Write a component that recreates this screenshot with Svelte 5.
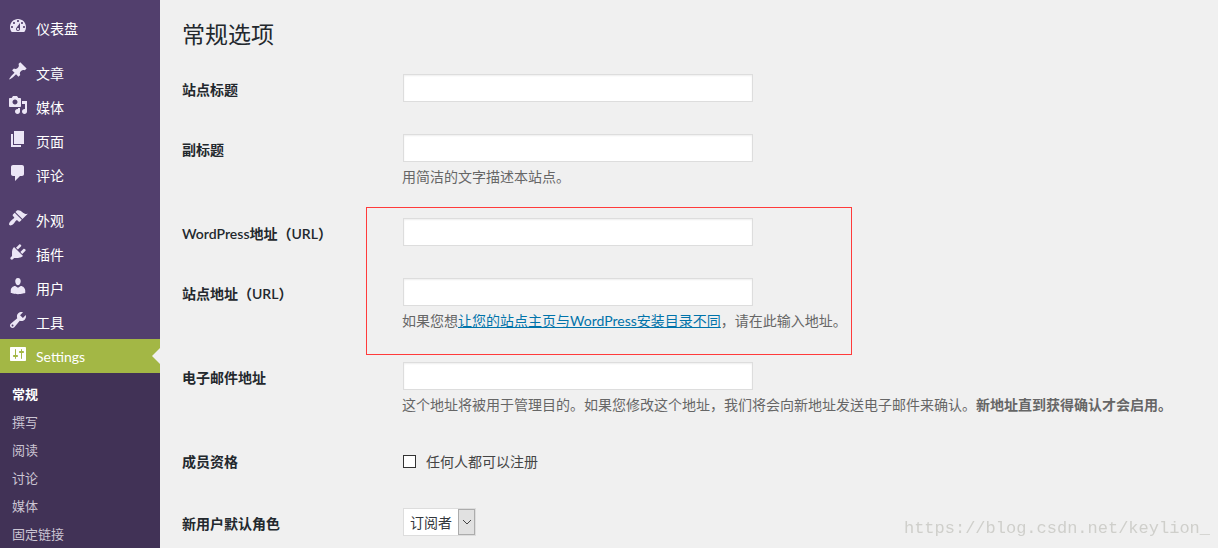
<script lang="ts">
	interface MenuItem {
		label: string;
		icon: string;
		gap?: boolean; // leaves a separator above the item
	}

	// 20x20 dashicons
	const menu: MenuItem[] = [
		{
			label: '仪表盘',
			icon: 'M3.76 16h12.48c1.1-1.37 1.76-3.11 1.76-5 0-4.42-3.58-8-8-8s-8 3.58-8 8c0 1.89.66 3.63 1.76 5zM10 4c.55 0 1 .45 1 1s-.45 1-1 1-1-.45-1-1 .45-1 1-1zM6 6c.55 0 1 .45 1 1s-.45 1-1 1-1-.45-1-1 .45-1 1-1zm8 0c.55 0 1 .45 1 1s-.45 1-1 1-1-.45-1-1 .45-1 1-1zm-5.37 5.55L12 7v6c0 1.1-.9 2-2 2s-2-.9-2-2c0-.57.24-1.08.63-1.45zM4 10c.55 0 1 .45 1 1s-.45 1-1 1-1-.45-1-1 .45-1 1-1zm12 0c.55 0 1 .45 1 1s-.45 1-1 1-1-.45-1-1 .45-1 1-1zm-5 3c0-.55-.45-1-1-1s-1 .45-1 1 .45 1 1 1 1-.45 1-1z'
		},
		{
			label: '文章',
			gap: true,
			icon: 'M10.44 3.02l1.82-1.82 6.36 6.35-1.83 1.82c-1.05-.68-2.48-.57-3.41.36l-.75.75c-.92.93-1.04 2.35-.35 3.41l-1.83 1.82-2.41-2.41-2.8 2.79c-.42.42-3.38 2.71-3.8 2.29s1.86-3.39 2.28-3.81l2.79-2.79L4.1 9.36l1.83-1.82c1.05.69 2.48.57 3.4-.36l.75-.75c.93-.92 1.05-2.35.36-3.41z'
		},
		{
			label: '媒体',
			icon: 'M13 11V4c0-.55-.45-1-1-1h-1.67L9 1H5L3.67 3H2c-.55 0-1 .45-1 1v7c0 .55.45 1 1 1h10c.55 0 1-.45 1-1zM7 4.5c1.38 0 2.5 1.12 2.5 2.5S8.38 9.5 7 9.5 4.5 8.38 4.5 7 5.62 4.5 7 4.5zM14 6h5v10.5c0 1.38-1.12 2.5-2.5 2.5S14 17.88 14 16.5s1.12-2.5 2.5-2.5c.17 0 .34.02.5.05V9h-3V6zm-4 8.05V13h2v3.5c0 1.38-1.12 2.5-2.5 2.5S7 17.88 7 16.5 8.12 14 9.5 14c.17 0 .34.02.5.05z'
		},
		{
			label: '页面',
			icon: 'M6 15V2h10v13H6zm-1 1h8v2H3V5h2v11z'
		},
		{
			label: '评论',
			icon: 'M5 2h9c1.1 0 2 .9 2 2v7c0 1.1-.9 2-2 2h-2l-5 5v-5H5c-1.1 0-2-.9-2-2V4c0-1.1.9-2 2-2z'
		},
		{
			label: '外观',
			gap: true,
			icon: 'M14.48 11.06L7.41 3.99l1.5-1.5c.5-.56 2.3-.47 3.51.32 1.21.8 1.43 1.28 2.91 2.1 1.18.64 2.45 1.26 4.45.85zm-.71.71L6.7 4.7 4.93 6.47c-.39.39-.39 1.02 0 1.41l1.06 1.06c.39.39.39 1.03 0 1.42-.6.6-1.43 1.11-2.21 1.69-.35.26-.7.53-1.01.84C1.43 14.23.4 16.08 1.4 17.07c.99 1 2.84-.03 4.18-1.36.31-.31.58-.66.85-1.02.57-.78 1.08-1.61 1.69-2.21.39-.39 1.02-.39 1.41 0l1.06 1.06c.39.39 1.02.39 1.41 0z'
		},
		{
			label: '插件',
			icon: 'M13.11 4.36L9.87 7.6 8 5.73l3.24-3.24c.35-.34 1.05-.2 1.56.32.52.51.66 1.21.31 1.55zm-8 1.77l.91-1.12 9.01 9.01-1.19.84c-.71.71-2.63 1.16-3.82 1.16H6.14L4.9 17.26c-.59.59-1.54.59-2.12 0-.59-.58-.59-1.53 0-2.12l1.24-1.24v-3.88c0-1.13.4-3.19 1.09-3.89zm7.26 3.97l3.24-3.24c.34-.35 1.04-.21 1.55.31.52.51.66 1.21.31 1.55l-3.24 3.25z'
		},
		{
			label: '用户',
			icon: 'M10 9.25c-2.27 0-2.73-3.44-2.73-3.44C7 4.02 7.82 2 9.97 2c2.16 0 2.98 2.02 2.71 3.81 0 0-.41 3.44-2.68 3.44zm0 2.57L12.72 10c2.39 0 4.52 2.33 4.52 4.53v2.49s-3.65 1.13-7.24 1.13c-3.65 0-7.24-1.13-7.24-1.13v-2.49c0-2.25 1.94-4.48 4.47-4.48z'
		},
		{
			label: '工具',
			icon: 'M16.68 9.77c-1.34 1.34-3.3 1.67-4.95.99l-5.41 6.52c-.99.99-2.59.99-3.58 0s-.99-2.59 0-3.57l6.52-5.42c-.68-1.65-.35-3.61.99-4.95 1.28-1.28 3.12-1.62 4.72-1.06l-2.89 2.89 2.82 2.82 2.86-2.87c.53 1.58.18 3.39-1.08 4.65zM3.81 16.21c.4.39 1.04.39 1.43 0 .4-.4.4-1.04 0-1.43-.39-.4-1.03-.4-1.43 0-.39.39-.39 1.03 0 1.43z'
		},
		{
			label: 'Settings',
			icon: 'M18 16V4c0-.55-.45-1-1-1H3c-.55 0-1 .45-1 1v12c0 .55.45 1 1 1h14c.55 0 1-.45 1-1zM8 11h1c.55 0 1 .45 1 1s-.45 1-1 1H8v1.5c0 .28-.22.5-.5.5s-.5-.22-.5-.5V13H6c-.55 0-1-.45-1-1s.45-1 1-1h1V5.5c0-.28.22-.5.5-.5s.5.22.5.5V11zm5-2h-1c-.55 0-1-.45-1-1s.45-1 1-1h1V5.5c0-.28.22-.5.5-.5s.5.22.5.5V7h1c.55 0 1 .45 1 1s-.45 1-1 1h-1v5.5c0 .28-.22.5-.5.5s-.5-.22-.5-.5V9z'
		}
	];

	const submenu = ['常规', '撰写', '阅读', '讨论', '媒体', '固定链接'];

	const currentItem = 'Settings';
	const currentPage = '常规';

	let title = $state('');
	let tagline = $state('');
	let wpUrl = $state('');
	let siteUrl = $state('');
	let email = $state('');
	let canRegister = $state(false);
	let role = $state('订阅者');
</script>

<div class="admin">
	<nav class="sidebar">
		<ul class="menu">
			{#each menu as item}
				<li class:gap={item.gap}>
					<a href="#top" class="menu-link" class:current={item.label === currentItem}>
						<svg class="menu-icon" viewBox="0 0 20 20" aria-hidden="true">
							<path d={item.icon} fill-rule="evenodd" />
						</svg>
						<span class="menu-label">{item.label}</span>
					</a>
				</li>
			{/each}
		</ul>
		<ul class="submenu">
			{#each submenu as page}
				<li>
					<a href="#top" class="submenu-link" class:current={page === currentPage}>{page}</a>
				</li>
			{/each}
		</ul>
	</nav>

	<main class="content">
		<h1>常规选项</h1>
		<form>
			<table class="form-table">
				<tbody>
					<tr>
						<th scope="row"><label for="blogname">站点标题</label></th>
						<td><input id="blogname" class="text" type="text" bind:value={title} /></td>
					</tr>
					<tr>
						<th scope="row"><label for="blogdescription">副标题</label></th>
						<td>
							<input id="blogdescription" class="text" type="text" bind:value={tagline} />
							<p class="description">用简洁的文字描述本站点。</p>
						</td>
					</tr>
					<tr>
						<th scope="row"><label for="siteurl">WordPress地址（URL）</label></th>
						<td class="marked">
							<input id="siteurl" class="text" type="url" bind:value={wpUrl} />
							<div class="marker"></div>
						</td>
					</tr>
					<tr>
						<th scope="row"><label for="home">站点地址（URL）</label></th>
						<td>
							<input id="home" class="text" type="url" bind:value={siteUrl} />
							<p class="description">
								如果您想<a href="#top">让您的站点主页与WordPress安装目录不同</a>，请在此输入地址。
							</p>
						</td>
					</tr>
					<tr>
						<th scope="row"><label for="admin_email">电子邮件地址</label></th>
						<td>
							<input id="admin_email" class="text" type="email" bind:value={email} />
							<p class="description">
								这个地址将被用于管理目的。如果您修改这个地址，我们将会向新地址发送电子邮件来确认。<strong>新地址直到获得确认才会启用。</strong>
							</p>
						</td>
					</tr>
					<tr>
						<th scope="row">成员资格</th>
						<td>
							<label class="check">
								<input type="checkbox" bind:checked={canRegister} />
								任何人都可以注册
							</label>
						</td>
					</tr>
					<tr>
						<th scope="row"><label for="default_role">新用户默认角色</label></th>
						<td>
							<div class="select">
								<select id="default_role" bind:value={role}>
									<option>订阅者</option>
								</select>
								<span class="select-arrow">
									<svg viewBox="0 0 10 6" aria-hidden="true"><path d="M1 1l4 4 4-4" /></svg>
								</span>
							</div>
						</td>
					</tr>
				</tbody>
			</table>
		</form>
	</main>

	<div class="watermark">https://blog.csdn.net/keylion_</div>
</div>

<style>
	:global(body) {
		margin: 0;
		background: #f0f0f0;
		color: #444;
		font-family: Lato, 'Noto Sans CJK SC', sans-serif;
		font-size: 14px;
	}

	.admin {
		display: flex;
		min-height: 100vh;
	}

	.sidebar {
		flex: 0 0 160px;
		background: #523f6d;
	}

	.menu,
	.submenu {
		list-style: none;
		margin: 0;
		padding: 0;
	}

	.menu {
		padding-top: 11px;
	}

	.gap {
		padding-top: 11px;
	}

	.menu-link {
		display: flex;
		position: relative;
		height: 34px;
		padding-left: 8px;
		gap: 8px;
		color: #fff;
		text-decoration: none;
	}

	.menu-link.current {
		background: #a3b745;
	}

	/* notch that points back at the page */
	.menu-link.current::after {
		content: '';
		position: absolute;
		top: 9px;
		right: 0;
		border: 8px solid transparent;
		border-left-width: 0;
		border-right-color: #f0f0f0;
	}

	.menu-icon {
		width: 20px;
		height: 20px;
		margin-top: 5px;
		fill: #ece6f6;
	}

	.current .menu-icon {
		fill: #fff;
	}

	.menu-label {
		line-height: 36px;
	}

	.submenu {
		padding-top: 7px;
		background: #413256;
	}

	.submenu-link {
		display: block;
		padding-left: 12px;
		color: #cbc5d3;
		font-size: 13px;
		line-height: 28px;
		text-decoration: none;
	}

	.submenu-link.current {
		color: #fff;
		font-weight: 700;
	}

	.content {
		flex: 1;
		min-width: 0;
		padding: 18px 20px 0 22px;
	}

	h1 {
		margin: 0;
		color: #23282d;
		font-size: 23px;
		font-weight: 400;
		line-height: 32px;
	}

	.form-table {
		width: 100%;
		margin-top: 8px;
		border-collapse: collapse;
	}

	th {
		box-sizing: border-box;
		width: 210px;
		padding: 22px 10px 0 0;
		color: #23282d;
		font-weight: 600;
		line-height: 20px;
		text-align: left;
		vertical-align: top;
	}

	td {
		padding: 15px 0 15px 10px;
		vertical-align: top;
	}

	.text {
		display: block;
		box-sizing: border-box;
		width: 350px;
		height: 28px;
		margin: 1px;
		padding: 3px 5px;
		border: 1px solid #ddd;
		background: #fff;
		box-shadow: inset 0 1px 2px rgba(0, 0, 0, 0.07);
		color: #32373c;
		font: inherit;
	}

	.description {
		margin: 5px 0 0;
		color: #666;
		line-height: 20px;
	}

	.description a {
		color: #0073aa;
	}

	.marked {
		position: relative;
	}

	/* red frame over both address fields */
	.marker {
		position: absolute;
		top: 5px;
		left: -26px;
		box-sizing: border-box;
		width: 486px;
		height: 148px;
		border: 1px solid #ff3b3b;
		pointer-events: none;
	}

	.check {
		display: flex;
		align-items: center;
		gap: 10px;
		height: 32px;
	}

	.check input {
		appearance: none;
		width: 13px;
		height: 13px;
		margin: 0 0 0 1px;
		border: 1px solid #333;
		background: #fff;
	}

	.check input:checked {
		box-shadow: inset 0 0 0 2px #fff;
		background: #333;
	}

	.select {
		position: relative;
		width: 73px;
		margin: 1px;
	}

	select {
		appearance: none;
		display: block;
		box-sizing: border-box;
		width: 100%;
		height: 28px;
		padding: 0 20px 0 6px;
		border: 1px solid #ddd;
		border-radius: 0;
		background: #fff;
		color: #32373c;
		font: inherit;
	}

	.select-arrow {
		position: absolute;
		top: 1px;
		right: 1px;
		bottom: 1px;
		display: flex;
		align-items: center;
		justify-content: center;
		width: 15px;
		border: 1px solid #acacac;
		background: #e1e1e1;
		pointer-events: none;
	}

	.select-arrow svg {
		width: 10px;
		height: 6px;
		fill: none;
		stroke: #444;
	}

	.watermark {
		position: fixed;
		right: 8px;
		bottom: 7px;
		color: #cfcfcb;
		font-family: 'Liberation Mono', monospace;
		font-size: 17px;
		line-height: 24px;
		pointer-events: none;
	}
</style>
